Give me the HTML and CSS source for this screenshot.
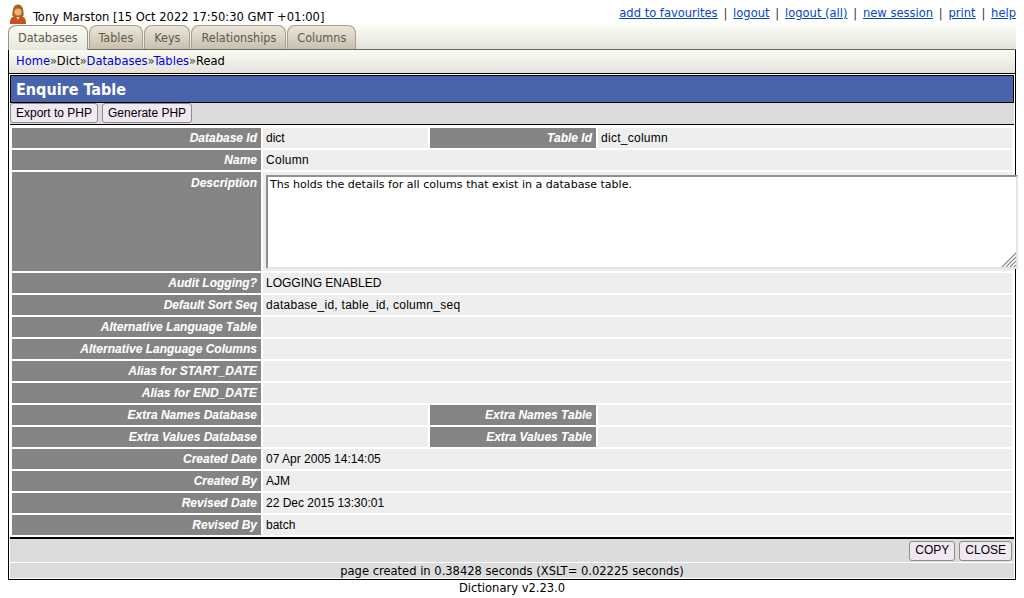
FILE: index.html
```html
<!DOCTYPE html>
<html lang="en">
<head>
<meta charset="utf-8">
<title>Enquire Table</title>
<link rel="stylesheet" href="styles.css">
</head>
<body>
<div class="page">
  <div class="top">
    <div class="user">
      <svg class="logo" width="16" height="20" viewBox="1 0 16 20">
        <path d="M1 20c0-5 1-7 5-8l3 2 3-2c4 1 5 3 5 8z" fill="#c4521c"/>
        <path d="M7 12l2 4 2-4-2 1z" fill="#f0d8b8"/>
        <path d="M3.500 12C3 5 5 .5 9 .5S15 5 14.500 12L12 13H6z" fill="#a8611f"/>
        <circle cx="9" cy="8" r="3.600" fill="#eeb27a"/>
      </svg>
      <span>Tony Marston [15 Oct 2022 17:50:30 GMT +01:00]</span>
    </div>
    <nav class="links">
      <a href="#">add to favourites</a><span class="sep">|</span><a href="#">logout</a><span class="sep">|</span><a href="#">logout (all)</a><span class="sep">|</span><a href="#">new session</a><span class="sep">|</span><a href="#">print</a><span class="sep">|</span><a href="#">help</a>
    </nav>
  </div>
  <div class="tabbar">
    <a class="tab tab-active" href="#">Databases</a>
    <a class="tab" href="#">Tables</a>
    <a class="tab" href="#">Keys</a>
    <a class="tab" href="#">Relationships</a>
    <a class="tab" href="#">Columns</a>
  </div>
  <div class="main">
    <div class="crumbs"><a href="#">Home</a><i>»</i>Dict<i>»</i><a href="#">Databases</a><i>»</i><a href="#">Tables</a><i>»</i>Read</div>
    <h1 class="title">Enquire Table</h1>
    <div class="actions">
      <button class="btn" type="button">Export to PHP</button>
      <button class="btn" type="button">Generate PHP</button>
    </div>
    <table class="data">
      <colgroup>
        <col class="c-label"><col class="c-val"><col class="c-label2"><col>
      </colgroup>
      <tr><th>Database Id</th><td>dict</td><th>Table Id</th><td class="lc">dict_column</td></tr>
      <tr><th>Name</th><td colspan="3" class="lc">Column</td></tr>
      <tr><th class="th-tall">Description</th><td colspan="3" class="has-area">
        <div class="area-wrap">
          <textarea class="area" readonly>Ths holds the details for all colums that exist in a database table.</textarea>
          <svg class="grip" width="15" height="15" viewBox="0 0 15 15"><path d="M1 15L15 1M5 15L15 5M9 15l6-6M13 15l2-2" stroke="#8a8a8a" stroke-width="1.200" fill="none"/></svg>
        </div>
      </td></tr>
      <tr><th>Audit Logging?</th><td colspan="3">LOGGING ENABLED</td></tr>
      <tr><th>Default Sort Seq</th><td colspan="3" class="lc">database_id, table_id, column_seq</td></tr>
      <tr><th>Alternative Language Table</th><td colspan="3"></td></tr>
      <tr><th>Alternative Language Columns</th><td colspan="3"></td></tr>
      <tr><th>Alias for START_DATE</th><td colspan="3"></td></tr>
      <tr><th>Alias for END_DATE</th><td colspan="3"></td></tr>
      <tr><th>Extra Names Database</th><td></td><th>Extra Names Table</th><td></td></tr>
      <tr><th>Extra Values Database</th><td></td><th>Extra Values Table</th><td></td></tr>
      <tr><th>Created Date</th><td colspan="3">07 Apr 2005 14:14:05</td></tr>
      <tr><th>Created By</th><td colspan="3">AJM</td></tr>
      <tr><th>Revised Date</th><td colspan="3">22 Dec 2015 13:30:01</td></tr>
      <tr><th>Revised By</th><td colspan="3">batch</td></tr>
    </table>
    <div class="bottom">
      <button class="btn" type="button">COPY</button>
      <button class="btn" type="button">CLOSE</button>
    </div>
    <div class="timing">page created in 0.38428 seconds (XSLT= 0.02225 seconds)</div>
  </div>
  <div class="version">Dictionary v2.23.0</div>
</div>
</body>
</html>
```
FILE: styles.css
```css
html, body { margin: 0; padding: 0; background: #fff; }
body { font-family: "DejaVu Sans Condensed", "DejaVu Sans", sans-serif; font-size: 12.8px; color: #000; }
.page { padding: 0 8px; height: 598px; box-sizing: border-box; overflow: hidden; }
.top { height: 25px; display: flex; justify-content: space-between; align-items: flex-start; }
.user { display: flex; align-items: flex-end; height: 25px; padding-left: 2px; gap: 7px; line-height: 14px; }
.user span { position: relative; top: -1px; }
.logo { display: block; position: relative; top: -1px; }
.links { padding-top: 5px; line-height: 15px; display: flex; }
.links a { color: #0645c8; text-decoration: underline; }
.sep { margin: 0 5.800px; color: #333; }
.tabbar { height: 24px; display: flex; align-items: flex-end; background: linear-gradient(#fbfbf6, #e4e3da); gap: 1px; border-bottom: 1px solid #6e6a5c; }
.tab { height: 24px; box-sizing: border-box; padding: 4px 9px 0; border: 1px solid #a89f8e; border-bottom: 0; border-radius: 8px 8px 0 0; background: linear-gradient(#ebe6da, #c9c0ad); color: #5e5a50; text-decoration: none; line-height: 16px; font-size: 12.5px; }
.tab-active { height: 25px; margin-bottom: -1px; padding: 4px 9px 0; background: linear-gradient(#fbfbf4, #e8e7dc); border-color: #9d9583; }
.main { border: 1px solid #000; border-top: 0; height: 530px; box-sizing: border-box; background: #fff; }
.crumbs { height: 23px; line-height: 21px; padding-left: 7px; background: linear-gradient(#fbfbf6, #e4e3da); border-bottom: 1px solid #000; }
.crumbs a { color: #0000e0; text-decoration: none; }
.crumbs i { font-style: normal; color: #444; }
.title { margin: 1px 1px 0; height: 28px; box-sizing: border-box; border: 1px solid #000; background: #4a64ac; color: #fff; font: bold 16px/28px "DejaVu Sans Condensed", "DejaVu Sans", sans-serif; padding-left: 5px; }
.actions { height: 21px; background: #dcdcdc; border-bottom: 1px solid #000; display: flex; gap: 4px; align-items: flex-start; margin: 0 1px; }
.btn { height: 20px; padding: 0 5px; border: 1px solid #8c8c8c; border-radius: 3px; background: #f1e8f3; font: 12px/15px "Liberation Sans", sans-serif; color: #000; margin: 0; }
.data { border-collapse: separate; border-spacing: 2px; table-layout: fixed; width: 1004px; margin: 1px 0 0 1px; font: 12px/14px "Liberation Sans", sans-serif; }
.c-label { width: 249px; }
.c-val { width: 165px; }
.c-label2 { width: 166px; }
.data th { background: #848484; color: #fff; font-weight: bold; font-style: italic; text-align: right; vertical-align: top; padding: 3px 4px 0 0; height: 20px; box-sizing: border-box; text-shadow: 0 0 1px #fff3; }
.data th.th-tall { padding-top: 4px; }
.data td { background: #eee; padding: 3px 0 0 3px; height: 20px; box-sizing: border-box; vertical-align: top; }
.data td.lc { letter-spacing: .27px; }
.data td.has-area { padding: 3px 0 0 3px; height: 99px; }
.area-wrap { position: relative; width: 752px; height: 94px; }
.area { display: block; width: 752px; height: 94px; box-sizing: border-box; margin: 0; padding: 1px 2px; border: 2px solid; border-color: #8f8f8f #dfe8e8 #dfe8e8 #8f8f8f; background: #fff; font: 11.060px/14px "DejaVu Sans", sans-serif; color: #000; resize: none; }
.grip { position: absolute; right: 2px; bottom: 2px; }
.bottom { margin: 0 1px; border-top: 2px solid #000; height: 25px; background: #dcdcdc; display: flex; justify-content: flex-end; align-items: center; gap: 4px; padding-right: 2px; box-sizing: border-box; }
.timing { margin: 0 1px; border-top: 1px solid #fff; height: 16px; line-height: 15px; background: #dcdcdc; text-align: center; box-sizing: border-box; }
.version { text-align: center; line-height: 15px; }
```
